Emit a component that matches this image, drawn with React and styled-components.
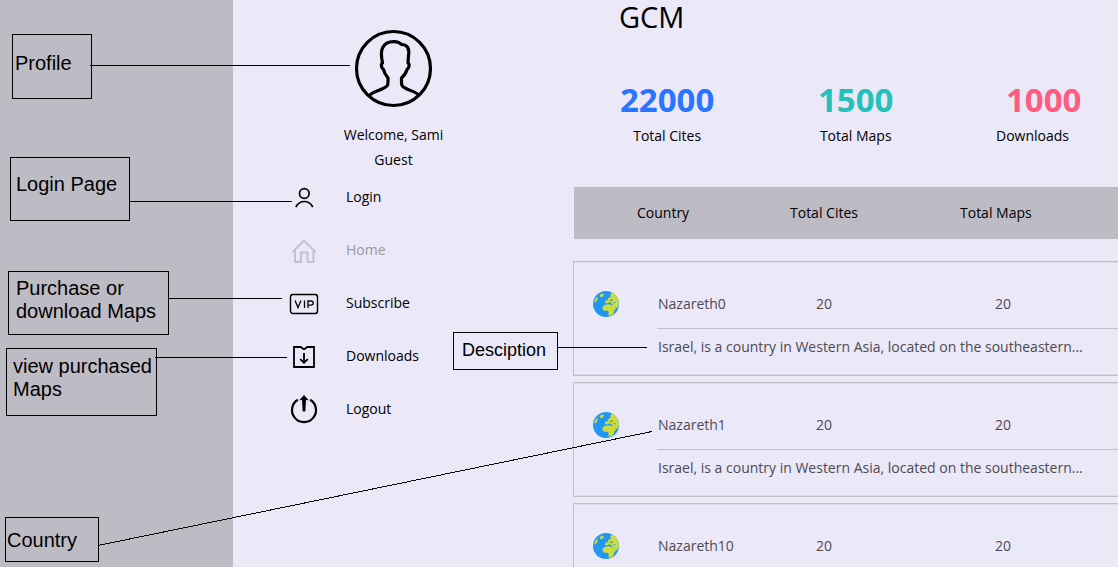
import React from "react";
import styled, { createGlobalStyle } from "styled-components";

const GlobalStyle = createGlobalStyle`
  * { box-sizing: border-box; }
  body {
    margin: 0;
    background: #ebe8f8;
    color: #000;
    font: 14px/20px "Open Sans", "Noto Sans", sans-serif;
  }
`;

const Page = styled.div`
  position: relative;
  display: flex;
  height: 100vh;
  overflow: hidden;
`;

const Rail = styled.div`
  flex: 0 0 233px;
  background: #bdbbc4;
`;

const Sidebar = styled.aside`
  flex: 0 0 321px;
  display: flex;
  flex-direction: column;
  padding-top: 29px;
`;

const Profile = styled.div`
  display: flex;
  flex-direction: column;
  align-items: center;
  line-height: 25px;

  svg { width: 80px; height: 80px; margin-bottom: 13px; }
`;

const Nav = styled.nav`
  display: flex;
  flex-direction: column;
`;

const NavButton = styled.button`
  display: flex;
  align-items: center;
  gap: 27px;
  height: 53px;
  padding: 0 0 4px 56px;
  border: 0;
  background: none;
  color: #000;
  font: inherit;
  text-align: left;

  svg { width: 30px; height: 30px; margin-top: 2px; }
  &:disabled { color: #9c99a5; }
  &:disabled svg { color: #c3c0cc; }
`;

const Main = styled.main`
  flex: 1;
  min-width: 0;
  display: flex;
  flex-direction: column;
  padding-left: 19px;
`;

const Title = styled.h1`
  margin: 0;
  padding-left: 46px;
  font-size: 29px;
  font-weight: 400;
  line-height: 34px;
`;

const Stats = styled.section`
  display: grid;
  grid-template-columns: 198px 178px 1fr;
  justify-items: start;
  padding: 43px 0 41px 47px;
`;

const Stat = styled.div`
  display: flex;
  flex-direction: column;
  align-items: ${(p) => (p.$shifted ? "flex-start" : "center")};
  gap: 4px;

  strong {
    align-self: ${(p) => (p.$shifted ? "flex-end" : "center")};
    padding-left: ${(p) => (p.$shifted ? "10px" : "0")};
    color: ${(p) => p.$color};
    font-size: 33px;
    line-height: 45px;
  }
`;

const Table = styled.table`
  display: flex;
  flex-direction: column;
  gap: 6px;
`;

const Head = styled.thead`
  display: block;
  margin: 0 0 16px 1px;
  background: #bdbbc4;

  tr {
    display: grid;
    grid-template-columns: 153px 170px 1fr;
    padding: 16px 0 16px 63px;
  }
  th { padding: 0; font-weight: 400; text-align: left; }
`;

const Card = styled.tbody`
  display: block;
  height: 115px;
  border: 1px solid #c1beca;
  border-right: 0;
  box-shadow: inset 0 1px #dedbe9, inset 0 -1px #dedbe9;
  color: #4d4b52;

  td { padding: 0; }
`;

const CityRow = styled.tr`
  display: grid;
  grid-template-columns: 65px 158px 179px 1fr;
  align-items: center;
  height: 66px;
  padding: 18px 0 0 19px;

  svg { display: block; width: 26px; height: 26px; }
`;

const DescriptionRow = styled.tr`
  display: block;
  margin-left: 83px;
  border-top: 1px solid #c1beca;

  td { display: block; padding: 8px 0 0 1px; white-space: nowrap; }
`;

const Callouts = styled.div`
  position: absolute;
  inset: 0;
  overflow: hidden;
  pointer-events: none;
`;

const Lines = styled.svg`
  position: absolute;
  inset: 0;
  width: 100%;
  height: 100%;
  stroke: #000;
  shape-rendering: crispEdges;
`;

const Callout = styled.div`
  position: absolute;
  left: ${(p) => p.$x}px;
  top: ${(p) => p.$y}px;
  width: ${(p) => p.$w}px;
  height: ${(p) => p.$h}px;
  padding: ${(p) => p.$pad};
  border: 1px solid #000;
  font: ${(p) => (p.$small ? 18 : 20)}px/23px "Liberation Sans", Arial, sans-serif;
  white-space: pre;
`;

const AvatarIcon = () => (
  <svg viewBox="0 0 80 80" fill="none" stroke="#000" strokeWidth="3.2" strokeLinejoin="round" aria-hidden="true">
    <circle cx="39.500" cy="39.500" r="37" />
    <path d="M15.500 66.500C17 63.500 24 62 29 59.500C33.500 57.500 34 56 34 53L34 49C31.500 46 30 43 29.500 40.500C27.500 39.500 26.500 35 28.500 34C27.500 29 26.500 23 28.500 19C31 13.500 37 12.500 41 12.700C44 13 46 13.500 47.500 15.500C54 15.500 55.500 20 54.500 27C54.300 30 54 32 54 34C56 35 55 39.500 53 40.500C52 44 50.500 46.500 47.500 49L47.500 53C47.500 56.500 48 57.500 52 59.500C57 62 63.500 63.500 65 66.500" />
  </svg>
);

const LoginIcon = () => (
  <svg viewBox="0 0 30 30" fill="none" stroke="currentColor" strokeWidth="1.700" aria-hidden="true">
    <circle cx="15.300" cy="10.500" r="4.800" />
    <path d="M6.800 24C8.800 20.500 11.800 18.500 15.300 18.500S21.800 20.500 23.800 24" />
  </svg>
);

const HomeIcon = () => (
  <svg viewBox="0 0 30 30" fill="none" stroke="currentColor" strokeWidth="1.900" aria-hidden="true">
    <path d="M3.500 16 15 4.500 26.500 16M6 14V26H12V16.500H18.500V26H24.500V14" />
  </svg>
);

const VipIcon = () => (
  <svg viewBox="0 0 30 30" fill="none" stroke="currentColor" strokeWidth="1.400" aria-hidden="true">
    <rect x="1.500" y="5.500" width="27" height="19" rx="2.500" />
    <path d="M6 11.500 9 18.500 12 11.500M15.500 11.500V19M19 19V12H21.800C25.100 12 25.100 16.200 21.800 16.200H19" strokeWidth="1.300" />
  </svg>
);

const DownloadIcon = () => (
  <svg viewBox="0 0 30 30" fill="none" stroke="currentColor" strokeWidth="1.800" aria-hidden="true">
    <path d="M5 5H11.500C13 5 12.500 7 15 7S17 5 18.500 5H25V25H5Z" />
    <path d="M15 11V20.500M11.200 17.200 15 20.700 18.800 17.200" />
  </svg>
);

const LogoutIcon = () => (
  <svg viewBox="0 0 30 30" fill="none" stroke="currentColor" strokeWidth="2.200" aria-hidden="true">
    <path d="M8.800 4.800A12 12 0 1 0 21.200 4.800" />
    <path d="M15 0 19.800 5.200 17 4.900 16.300 16.500H13.700L13 4.900 10.200 5.200Z" fill="currentColor" stroke="none" />
  </svg>
);

const GlobeIcon = () => (
  <svg viewBox="0 0 26 26" aria-hidden="true">
    <circle cx="13" cy="13" r="13" fill="#2196f3" />
    <path fill="#cddc39" d="M19 1.400 17 4 18 5.500 14.500 7.500 15.500 9 12.500 9.500 11.800 12 14.500 12.500 16.500 11 18 12.500 20 13 19 14.300 16 13.300 12 13.800 9.300 16 9.800 18.800 11.500 19.800 14.800 19.800 15.800 21.500 15.200 23.500 16.500 24.800 19 24.300 20.800 22 21 20 23 17.500 21.800 15.500 23.500 17 25 16 25.900 13C25.900 8 23.500 3.800 19 1.400ZM6.500 4.300 9 2.600 11 3.200 10 5.500 7.500 6.200ZM1.500 9.500 3.500 6 5 7 3.500 10.500 1.300 11.500Z" />
    <path fill="#2196f3" d="M17 9 19 8 19.800 9.500 18 10.300ZM20 11.500 22.500 11 22 12.500Z" />
  </svg>
);

const navItems = [
  { label: "Login", Icon: LoginIcon },
  { label: "Home", Icon: HomeIcon, current: true },
  { label: "Subscribe", Icon: VipIcon },
  { label: "Downloads", Icon: DownloadIcon },
  { label: "Logout", Icon: LogoutIcon },
];

const cities = ["Nazareth0", "Nazareth1", "Nazareth10"];

const callouts = [
  { text: "Profile", x: 12, y: 34, w: 80, h: 65, pad: "17px 2px" },
  { text: "Login Page", x: 10, y: 157, w: 120, h: 64, pad: "15px 5px" },
  { text: "Purchase or\ndownload Maps", x: 8, y: 271, w: 161, h: 64, pad: "5px 7px" },
  { text: "view purchased\nMaps", x: 6, y: 348, w: 151, h: 68, pad: "6px 6px" },
  { text: "Desciption", x: 453, y: 332, w: 105, h: 38, pad: "6px 8px", small: true },
  { text: "Country", x: 5, y: 517, w: 94, h: 45, pad: "11px 1px" },
];

export default function App() {
  return (
    <Page>
      <GlobalStyle />
      <Rail />
      <Sidebar>
        <Profile>
          <AvatarIcon />
          <span>Welcome, Sami</span>
          <span>Guest</span>
        </Profile>
        <Nav>
          {navItems.map(({ label, Icon, current }) => (
            <NavButton key={label} type="button" disabled={current}>
              <Icon />
              {label}
            </NavButton>
          ))}
        </Nav>
      </Sidebar>
      <Main>
        <Title>GCM</Title>
        <Stats>
          <Stat $color="#2b74ff"><strong>22000</strong><span>Total Cites</span></Stat>
          <Stat $color="#24c1bc"><strong>1500</strong><span>Total Maps</span></Stat>
          <Stat $color="#ff5c7f" $shifted><strong>1000</strong><span>Downloads</span></Stat>
        </Stats>
        <Table>
          <Head>
            <tr><th scope="col">Country</th><th scope="col">Total Cites</th><th scope="col">Total Maps</th></tr>
          </Head>
          {cities.map((city) => (
            <Card key={city}>
              <CityRow>
                <td><GlobeIcon /></td>
                <td>{city}</td>
                <td>20</td>
                <td>20</td>
              </CityRow>
              <DescriptionRow>
                <td colSpan={4}>Israel, is a country in Western Asia, located on the southeastern...</td>
              </DescriptionRow>
            </Card>
          ))}
        </Table>
      </Main>
      <Callouts>
        <Lines aria-hidden="true">
          <path d="M90 65.500H350M130 201.500H292M169 298.500H282M155 357.500H287M557 347.500H647M98 545.500 652 431.500" />
        </Lines>
        {callouts.map((c) => (
          <Callout key={c.text} $x={c.x} $y={c.y} $w={c.w} $h={c.h} $pad={c.pad} $small={c.small}>
            {c.text}
          </Callout>
        ))}
      </Callouts>
    </Page>
  );
}
